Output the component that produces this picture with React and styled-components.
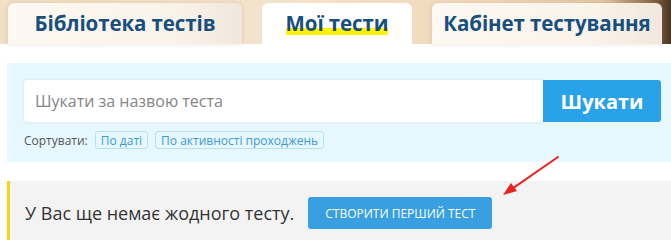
import React from 'react';
import styled, { createGlobalStyle } from 'styled-components';

const GlobalStyle = createGlobalStyle`
  body {
    margin: 0;
    background: #fff;
    font-family: "Open Sans", "Liberation Sans", sans-serif;
  }
`;

const tabs = [
  { id: 'library', title: 'Бібліотека тестів', width: 234 },
  { id: 'mine', title: 'Мої тести', width: 150, active: true },
  { id: 'cabinet', title: 'Кабінет тестування', width: 230 },
];

const sorts = ['По даті', 'По активності проходжень'];

const App = () => {
  return (
    <Page>
      <GlobalStyle />
      <TabStrip>
        {tabs.map((tab) => (
          <Tab key={tab.id} $active={tab.active} $width={tab.width}>
            <TabLabel $active={tab.active}>{tab.title}</TabLabel>
          </Tab>
        ))}
      </TabStrip>

      <SearchPanel>
        <SearchRow>
          <SearchInput placeholder="Шукати за назвою теста" />
          <SearchButton>Шукати</SearchButton>
        </SearchRow>
        <SortRow>
          <SortLabel>Сортувати:</SortLabel>
          {sorts.map((s) => (
            <SortChip key={s}>{s}</SortChip>
          ))}
        </SortRow>
      </SearchPanel>

      <Notice>
        <NoticeText>У Вас ще немає жодного тесту.</NoticeText>
        <CreateButton>Створити перший тест</CreateButton>
      </Notice>

      <Arrow width="60" height="42" viewBox="0 0 60 42">
        <line x1="57" y1="2" x2="8" y2="36" stroke="#e8231f" strokeWidth="2" strokeLinecap="round" />
        <polygon points="2,40 16,36 10,28" fill="#e8231f" />
      </Arrow>
    </Page>
  );
};

export default App;

const Page = styled.div`
  position: relative;
  width: 671px;
  height: 240px;
  overflow: hidden;
`;

const TabStrip = styled.div`
  display: flex;
  gap: 20px;
  height: 44px;
  padding: 3px 0 0 8px;
  box-sizing: border-box;
  background: linear-gradient(90deg, #f1dfc6 0%, #f4e3cc 40%, #efd8ba 75%, #e3c7a1 90%, #8a6a4c 97%, #4a3522 100%);
`;

const Tab = styled.div`
  width: ${(p) => p.$width}px;
  display: flex;
  align-items: center;
  justify-content: center;
  border-radius: 6px 6px 0 0;
  background: ${(p) => (p.$active ? '#fff' : 'linear-gradient(90deg, #fdf8f2, #faf3ea 70%, #f1e7dc)')};
  box-shadow: ${(p) => (p.$active ? 'none' : '0 0 4px rgba(160, 120, 70, 0.25)')};
  padding-bottom: 2px;
`;

const TabLabel = styled.span`
  font-size: 20.5px;
  font-weight: 700;
  color: #174f7e;
  letter-spacing: -0.1px;
  background: ${(p) => (p.$active ? 'linear-gradient(transparent 68%, #fff200 68%, #fff200 92%, transparent 92%)' : 'none')};
`;

const SearchPanel = styled.div`
  margin: 19px 0 0 7px;
  height: 99px;
  box-sizing: border-box;
  padding: 17px 10px 0 17px;
  background: #e6f7fd;
`;

const SearchRow = styled.div`
  display: flex;
  height: 42px;
`;

const SearchInput = styled.input`
  flex: 1;
  border: none;
  outline: none;
  border-radius: 3px 0 0 3px;
  padding: 0 11px;
  font-family: "Open Sans", "Liberation Sans", sans-serif;
  font-size: 16px;
  color: #333;
  background: #fff;
  box-shadow: 0 0 3px rgba(120, 170, 190, 0.25);

  &::placeholder {
    color: #858585;
  }
`;

const SearchButton = styled.button`
  width: 118px;
  border: none;
  border-radius: 0 3px 3px 0;
  background: #29a2ea;
  color: #fff;
  font-family: "Open Sans", "Liberation Sans", sans-serif;
  font-size: 20px;
  font-weight: 700;
`;

const SortRow = styled.div`
  display: flex;
  align-items: center;
  gap: 7px;
  margin-top: 9px;
`;

const SortLabel = styled.span`
  font-size: 12px;
  color: #555;
`;

const SortChip = styled.span`
  height: 18px;
  box-sizing: border-box;
  display: flex;
  align-items: center;
  padding: 0 5px;
  border: 1px solid #b8e0ef;
  border-radius: 3px;
  font-size: 12px;
  color: #3d9ad6;
`;

const Notice = styled.div`
  margin: 19px 0 0 7px;
  height: 64px;
  box-sizing: border-box;
  display: flex;
  align-items: flex-start;
  gap: 14px;
  padding: 16px 0 0 15px;
  background: #f3f3f3;
  border-left: 3px solid #fdd20e;
`;

const NoticeText = styled.span`
  font-size: 18px;
  color: #333;
  line-height: 32px;
`;

const CreateButton = styled.button`
  height: 32px;
  padding: 0 17px;
  border: none;
  border-radius: 3px;
  background: #389fe1;
  color: #fff;
  font-family: "Open Sans", "Liberation Sans", sans-serif;
  font-size: 12px;
  text-transform: uppercase;
`;

const Arrow = styled.svg`
  position: absolute;
  left: 501px;
  top: 155px;
`;
